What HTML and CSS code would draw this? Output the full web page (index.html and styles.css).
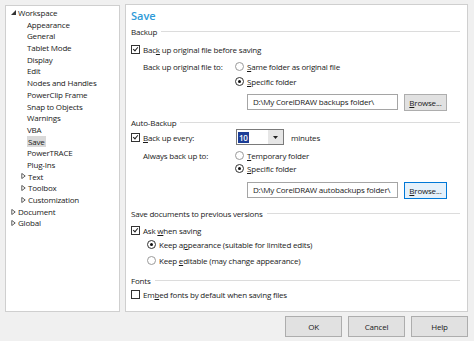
FILE: index.html
```html
<!DOCTYPE html>
<html lang="en">
<head>
    <meta charset="UTF-8">
    <title>Options - Save</title>
    <link rel="stylesheet" href="styles.css">
</head>
<body>
    <div class="dialog">
        <div class="main">
            <ul class="tree">
                <li class="node"><svg class="tri" viewBox="0 0 5 5"><path d="M5 0 L5 5 L0 5 Z" fill="#333"/></svg>Workspace</li>
                <li class="leaf">Appearance</li>
                <li class="leaf">General</li>
                <li class="leaf">Tablet Mode</li>
                <li class="leaf">Display</li>
                <li class="leaf">Edit</li>
                <li class="leaf">Nodes and Handles</li>
                <li class="leaf">PowerClip Frame</li>
                <li class="leaf">Snap to Objects</li>
                <li class="leaf">Warnings</li>
                <li class="leaf">VBA</li>
                <li class="leaf"><span class="selected">Save</span></li>
                <li class="leaf">PowerTRACE</li>
                <li class="leaf">Plug-Ins</li>
                <li class="sub"><svg class="tri" viewBox="0 0 5 7"><path d="M0.5 0.5 L4.5 3.5 L0.5 6.5 Z" fill="none" stroke="#444"/></svg>Text</li>
                <li class="sub"><svg class="tri" viewBox="0 0 5 7"><path d="M0.5 0.5 L4.5 3.5 L0.5 6.5 Z" fill="none" stroke="#444"/></svg>Toolbox</li>
                <li class="sub"><svg class="tri" viewBox="0 0 5 7"><path d="M0.5 0.5 L4.5 3.5 L0.5 6.5 Z" fill="none" stroke="#444"/></svg>Customization</li>
                <li class="node"><svg class="tri" viewBox="0 0 5 7"><path d="M0.5 0.5 L4.5 3.5 L0.5 6.5 Z" fill="none" stroke="#444"/></svg>Document</li>
                <li class="node"><svg class="tri" viewBox="0 0 5 7"><path d="M0.5 0.5 L4.5 3.5 L0.5 6.5 Z" fill="none" stroke="#444"/></svg>Global</li>
            </ul>

            <div class="page">
                <div class="title">Save</div>

                <div class="group g-backup"><span>Backup</span></div>
                <div class="row r-backup-orig">
                    <span class="box checked"></span><span>Bac<u>k</u> up original file before saving</span>
                </div>
                <div class="row r-orig-to">
                    <span class="label">Back up original file to:</span>
                    <span class="radio"></span><span><u>S</u>ame folder as original file</span>
                </div>
                <div class="row r-specific">
                    <span class="radio on"></span><span><u>S</u>pecific folder</span>
                </div>
                <div class="path r-path1">
                    <span class="field">D:\My CorelDRAW backups folder\</span>
                    <span class="btn browse"><u>B</u>rowse...</span>
                </div>

                <div class="group g-auto"><span>Auto-Backup</span></div>
                <div class="row r-every">
                    <span class="box checked"></span><span class="every-label"><u>B</u>ack up every:</span>
                    <span class="spin"><span class="sel-text">10</span><span class="drop"><svg viewBox="0 0 5 3"><path d="M0 0 L5 0 L2.5 3 Z" fill="#222"/></svg></span></span>
                    <span class="unit">minutes</span>
                </div>
                <div class="row r-always">
                    <span class="label">Always back up to:</span>
                    <span class="radio"></span><span><u>T</u>emporary folder</span>
                </div>
                <div class="row r-specific2">
                    <span class="radio on"></span><span><u>S</u>pecific folder</span>
                </div>
                <div class="path r-path2">
                    <span class="field">D:\My CorelDRAW autobackups folder\</span>
                    <span class="btn browse focus"><u>B</u>rowse...</span>
                </div>

                <div class="group g-versions"><span>Save documents to previous versions</span></div>
                <div class="row r-ask">
                    <span class="box checked"></span><span>Ask <u>w</u>hen saving</span>
                </div>
                <div class="row r-keep1">
                    <span class="radio on"></span><span>Keep a<u>p</u>pearance (suitable for limited edits)</span>
                </div>
                <div class="row r-keep2">
                    <span class="radio"></span><span>Keep <u>e</u>ditable (may change appearance)</span>
                </div>

                <div class="group g-fonts"><span>Fonts</span></div>
                <div class="row r-embed">
                    <span class="box"></span><span>Em<u>b</u>ed fonts by default when saving files</span>
                </div>
            </div>
        </div>

        <div class="buttons">
            <span class="btn">OK</span>
            <span class="btn">Cancel</span>
            <span class="btn">Help</span>
        </div>
    </div>
</body>
</html>
```

FILE: styles.css
```css
body {
    margin: 0;
    background-color: #f0f0f0;
    font-family: "Open Sans", "Noto Sans", sans-serif;
    font-size: 8px;
    letter-spacing: -0.2px;
    color: #1a1a1a;
}
.dialog {
    padding: 4px 6px 0 5px;
}
.main {
    display: flex;
    gap: 5px;
    height: 308px;
}
.tree {
    list-style: none;
    margin: 0;
    padding: 1px 0 0 0;
    width: 115px;
    box-sizing: border-box;
    background-color: white;
    border: 1px solid #cfcfcf;
    margin-top: 1px;
    height: 307px;
}
.tree li {
    height: 11.7px;
    line-height: 11.7px;
    white-space: nowrap;
    display: flex;
    align-items: center;
}
.tree .node {
    padding-left: 5px;
}
.tree .sub {
    padding-left: 15px;
}
.tree .leaf {
    padding-left: 21px;
}
.tri {
    width: 5px;
    height: 6px;
    margin-right: 2px;
}
.tree .node:first-child .tri {
    height: 5px;
}
.selected {
    background-color: #d9d9d9;
    padding: 0 1px;
    line-height: 11px;
}
.page {
    flex: 1;
    background-color: white;
    border: 1px solid #cfcfcf;
    padding: 4px 6px 0 5px;
}
.title {
    height: 14px;
    line-height: 14px;
    font-size: 11px;
    font-weight: 600;
    letter-spacing: 0;
    color: #2e9ad8;
}
.group {
    height: 12px;
    display: flex;
    align-items: center;
}
.group::after {
    content: "";
    flex: 1;
    height: 1px;
    background-color: #dcdcdc;
    margin: 0 1px 0 4px;
}
.row {
    height: 12px;
    display: flex;
    align-items: center;
    white-space: nowrap;
}
.box {
    width: 7px;
    height: 7px;
    border: 1px solid #333;
    margin-right: 3px;
    position: relative;
    flex: none;
}
.box.checked::after {
    content: "";
    position: absolute;
    left: 2px;
    top: 0;
    width: 2px;
    height: 4px;
    border: solid #222;
    border-width: 0 1.3px 1.3px 0;
    transform: rotate(40deg);
}
.radio {
    width: 7px;
    height: 7px;
    border: 1px solid #9a9a9a;
    border-radius: 50%;
    margin-right: 3px;
    position: relative;
    flex: none;
}
.radio.on {
    border-color: #333;
}
.radio.on::after {
    content: "";
    position: absolute;
    left: 2px;
    top: 2px;
    width: 3px;
    height: 3px;
    border-radius: 50%;
    background-color: #111;
}
.label {
    width: 92px;
    margin-left: 12px;
}
.g-backup { margin-top: 2px; }
.r-backup-orig { margin-top: 6px; }
.r-orig-to { margin-top: 5px; }
.r-specific { margin-top: 3px; padding-left: 104px; }
.path {
    display: flex;
    align-items: center;
    padding-left: 116px;
    height: 16px;
}
.r-path1 { margin-top: 7px; }
.field {
    width: 151px;
    height: 16px;
    box-sizing: border-box;
    border: 1px solid #a5a5a5;
    line-height: 14px;
    padding-left: 5px;
    white-space: nowrap;
}
.btn {
    box-sizing: border-box;
    border: 1px solid #adadad;
    background-color: #e1e1e1;
    text-align: center;
    white-space: nowrap;
}
.browse {
    width: 43px;
    height: 17px;
    line-height: 15px;
    margin-left: 6px;
}
.browse.focus {
    border-color: #0078d7;
    background-color: #e5f1fb;
}
.g-auto { margin-top: 6px; }
.r-every {
    margin-top: 1px;
    height: 16px;
}
.every-label {
    width: 93px;
}
.spin {
    display: flex;
    align-items: center;
    width: 48px;
    height: 16px;
    box-sizing: border-box;
    border: 1px solid #7a7a7a;
    padding-left: 1px;
}
.sel-text {
    background-color: #1c3d96;
    color: white;
    line-height: 11px;
    padding: 0 1px;
    font-weight: 600;
}
.drop {
    margin-left: auto;
    width: 15px;
    height: 14px;
    background-color: #e6e6e6;
    display: flex;
    align-items: center;
    justify-content: center;
}
.drop svg {
    width: 5px;
    height: 3px;
}
.unit {
    margin-left: 7px;
}
.r-always { margin-top: 4px; }
.r-specific2 { margin-top: 1px; padding-left: 104px; }
.r-path2 { margin-top: 8px; }
.g-versions { margin-top: 9px; }
.r-ask { margin-top: 5px; }
.r-keep1 { margin-top: 2px; padding-left: 16px; }
.r-keep2 { margin-top: 4px; padding-left: 16px; }
.g-fonts { margin-top: 8px; }
.r-embed { margin-top: 2px; }
.buttons {
    display: flex;
    justify-content: flex-end;
    gap: 6px;
    padding-top: 4px;
}
.buttons .btn {
    width: 57px;
    height: 21px;
    line-height: 19px;
}
```
